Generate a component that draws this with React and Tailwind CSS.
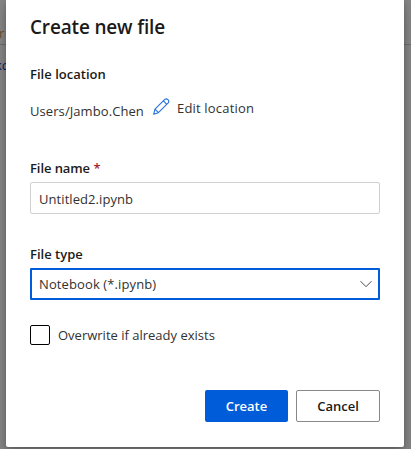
import React from "react";

function Label({ children, className = "" }) {
  return (
    <div className={`h-5 whitespace-nowrap text-[13px] leading-5 font-semibold ${className}`}>{children}</div>
  );
}

function PencilIcon() {
  return (
    <svg className="block h-[17px] w-[17px] shrink-0" viewBox="0 0 17 17" fill="none" stroke="#2470dd" strokeWidth="1.1" strokeLinejoin="round">
      <path d="M0.7 16.2 L2 11.1 L11.8 1.4 Q13.4 0.2 14.9 1.6 Q16.5 3.2 15.2 4.9 L5.4 14.7 Z" />
      <path d="M10.4 2.9 L13.8 6.3 M2 11.1 L5.4 14.7" />
    </svg>
  );
}

export default function App() {
  return (
    <div className="relative h-[449px] w-[411px] overflow-hidden bg-[#858585] font-['Open_Sans','Noto_Sans',sans-serif] text-[#1b1a19]">
      <div className="absolute top-[44px] left-0 h-px w-full bg-[#6c6c6c]" />
      <div className="absolute top-[25px] left-[-1px] text-[13px] leading-4 text-[#6b4d2c]">r</div>
      <div className="absolute top-[57px] left-[-5px] text-[13px] leading-4 text-[#0a1a5c]">kc</div>
      <main className="relative ml-[6px] flex h-[447px] w-[398px] flex-col rounded-b-[2px] bg-white px-6 shadow-[0_6px_14px_rgba(0,0,0,0.22),0_1px_4px_rgba(0,0,0,0.18)]">
        <h1 className="mt-[13px] h-7 text-[19px] leading-7 font-semibold whitespace-nowrap">
          <span className="tracking-[-0.17px]">Create new file</span>
        </h1>
        <Label className="mt-[23px]"><span className="tracking-[0.02px]">File location</span></Label>
        <div className="mt-[14px] flex h-6 whitespace-nowrap text-[13px] leading-5 text-[#323130]">
          <span className="mt-[3px] w-[123px] tracking-[0.08px]">Users/Jambo.Chen</span>
          <PencilIcon />
          <span className="ml-[7px] tracking-[0.18px]">Edit location</span>
        </div>
        <Label className="mt-[36px]">
          <span className="tracking-[-0.08px]">File name</span> <span className="text-[#a4262c]">*</span>
        </Label>
        <div className="mt-1 flex h-8 items-center rounded-[2px] border border-[#d2d0ce] px-2 pt-[3px] text-[13px] text-[#323130]">
          <span className="tracking-[0.07px]">Untitled2.ipynb</span>
        </div>
        <Label className="mt-[30px]"><span>File type</span></Label>
        <div className="mt-1 flex h-8 items-center justify-between rounded-[1px] border-2 border-[#015cda] pr-[6px] pl-[7px] text-[13px] text-[#323130]">
          <span className="pt-[2px] tracking-[0.11px]">Notebook (*.ipynb)</span>
          <svg className="h-3 w-3" viewBox="0 0 12 12" fill="none" stroke="#4b4a49" strokeWidth="1">
            <path d="M0.5 3.2 L6 8.7 L11.5 3.2" />
          </svg>
        </div>
        <div className="mt-[25px] flex h-5 items-center text-[13px] text-[#323130]">
          <span className="mr-2 h-5 w-5 rounded-[2px] border border-black" />
          <span className="pt-[2px]">Overwrite if already exists</span>
        </div>
        <div className="mt-[45px] flex justify-end gap-2 text-[13px] font-semibold">
          <button className="h-8 w-[83px] rounded-[2px] bg-[#015cda] pt-[2px] text-white"><span>Create</span></button>
          <button className="h-8 w-[84px] rounded-[2px] border border-[#8a8886] pt-[2px] text-[#1b1a19]"><span>Cancel</span></button>
        </div>
      </main>
    </div>
  );
}
